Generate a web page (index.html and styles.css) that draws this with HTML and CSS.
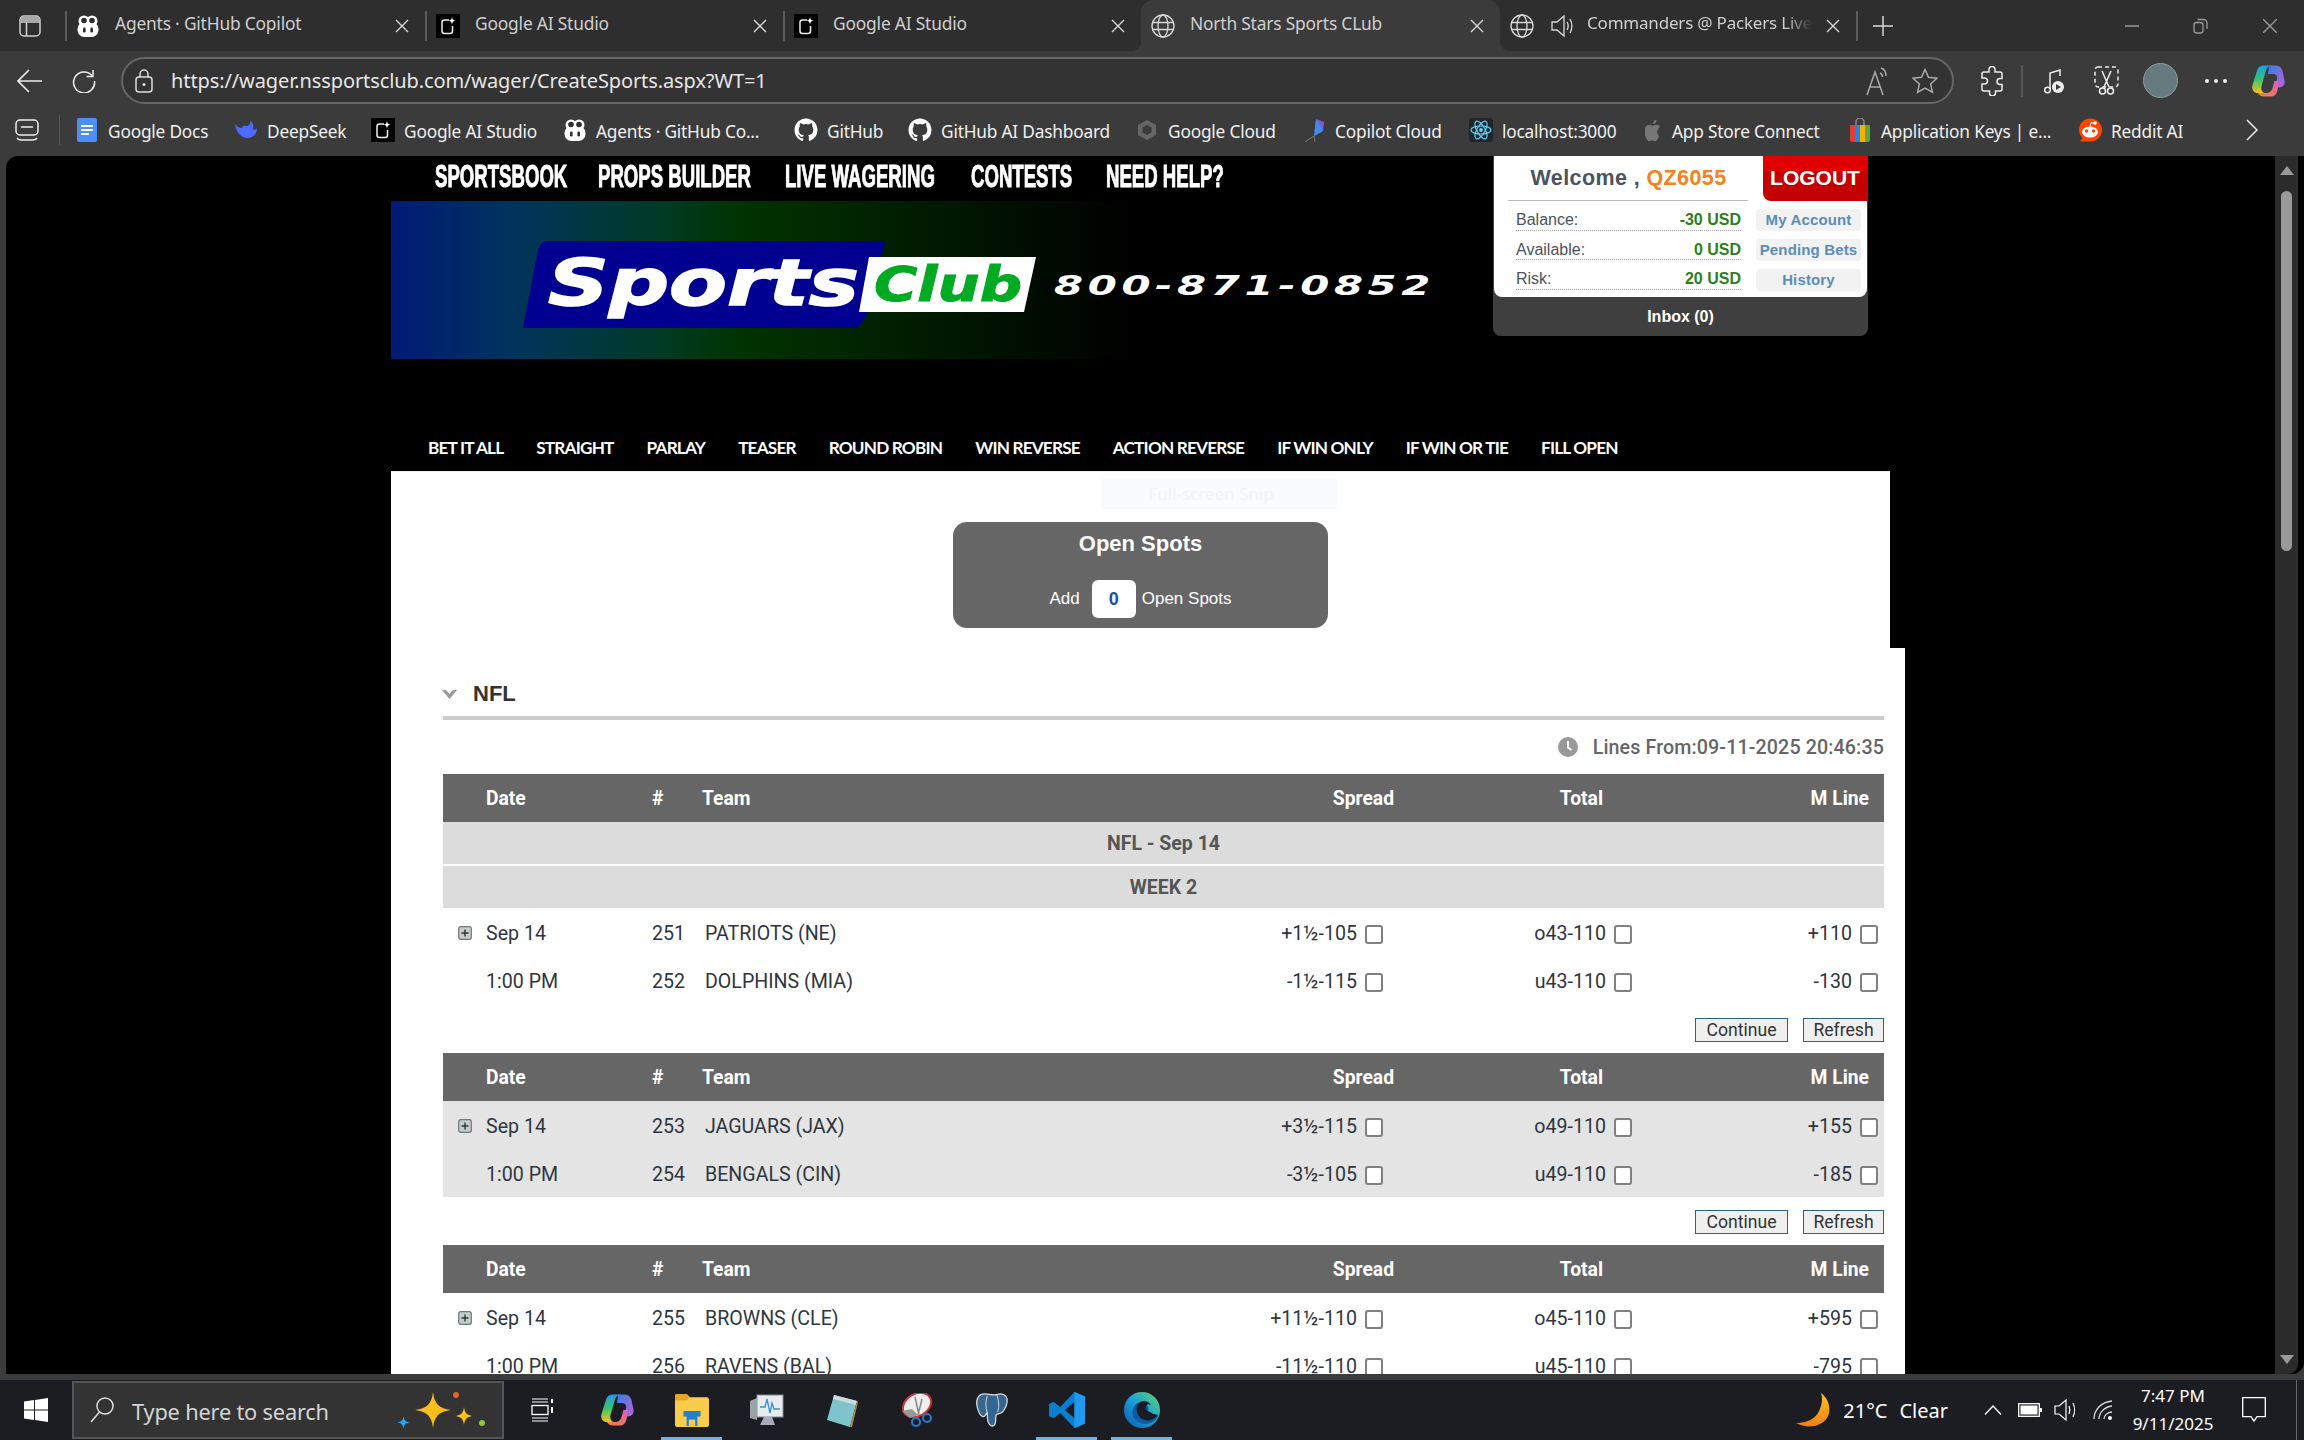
FILE: index.html
```html
<!DOCTYPE html>
<html lang="en">
<head>
<meta charset="utf-8">
<title>North Stars Sports CLub</title>
<link rel="stylesheet" href="styles.css">
</head>
<body>
<svg class="defs" width="0" height="0" aria-hidden="true">
  <defs>
    <linearGradient id="cpA" x1="0" y1="0" x2="0" y2="1"><stop offset="0" stop-color="#1e9be8"/><stop offset=".5" stop-color="#36c56c"/><stop offset="1" stop-color="#f6c21c"/></linearGradient>
    <linearGradient id="cpB" x1="0" y1="0" x2="1" y2="1"><stop offset="0" stop-color="#2f7fe8"/><stop offset="1" stop-color="#c060e0"/></linearGradient>
    <linearGradient id="cpC" x1="1" y1="0" x2="0" y2="1"><stop offset="0" stop-color="#d860b8"/><stop offset="1" stop-color="#f7803a"/></linearGradient>
    <linearGradient id="edgeG" x1="0" y1="1" x2="1" y2="0"><stop offset="0" stop-color="#0c59a4"/><stop offset=".5" stop-color="#1aa0d8"/><stop offset="1" stop-color="#5fd66a"/></linearGradient>
    <linearGradient id="moonG" x1="0" y1="0" x2="0" y2="1"><stop offset="0" stop-color="#f7c222"/><stop offset="1" stop-color="#ef7f1a"/></linearGradient>
    <symbol id="agent" viewBox="0 0 24 24"><circle cx="8" cy="7" r="5.5" fill="#fff"/><circle cx="16" cy="7" r="5.5" fill="#fff"/><rect x="1.5" y="8" width="21" height="15" rx="7" fill="#fff"/><circle cx="8" cy="6.5" r="2.8" fill="#2e2e2e"/><circle cx="16" cy="6.5" r="2.8" fill="#2e2e2e"/><rect x="7" y="13.5" width="2.6" height="5" rx="1.3" fill="#2e2e2e"/><rect x="14.4" y="13.5" width="2.6" height="5" rx="1.3" fill="#2e2e2e"/></symbol>
    <symbol id="aistudio" viewBox="0 0 24 24"><rect width="24" height="24" fill="#000"/><path d="M13 6H8.5A2.5 2.5 0 0 0 6 8.500V17a2.500 2.500 0 0 0 2.500 2.500H14a2.500 2.500 0 0 0 2.500-2.500V12" fill="none" stroke="#eee" stroke-width="1.500"/><path d="M16 3c.3 2.400 1.300 3.400 3.700 3.700C17.300 7 16.300 8 16 10.400 15.700 8 14.700 7 12.300 6.700 14.700 6.400 15.700 5.400 16 3z" fill="#fff"/></symbol>
    <symbol id="globe" viewBox="0 0 24 24"><g fill="none" stroke="#d8d8d8" stroke-width="1.300"><circle cx="12" cy="12" r="11"/><ellipse cx="12" cy="12" rx="5" ry="11"/><path d="M1.500 8.500h21M1.500 15.500h21"/></g></symbol>
    <symbol id="close" viewBox="0 0 14 14"><path d="M1 1l12 12M13 1L1 13" fill="none" stroke="#d8d8d8" stroke-width="1.400"/></symbol>
    <symbol id="octo" viewBox="0 0 24 24"><path fill="#fff" d="M12 .5C5.650.5.500 5.650.500 12c0 5.080 3.290 9.390 7.860 10.910.580.110.790-.250.790-.560v-2.140c-3.200.700-3.870-1.360-3.870-1.360-.520-1.330-1.280-1.690-1.280-1.690-1.050-.720.080-.700.080-.700 1.160.080 1.770 1.190 1.770 1.190 1.030 1.760 2.700 1.250 3.360.960.100-.750.400-1.250.730-1.540-2.550-.290-5.240-1.280-5.240-5.690 0-1.260.450-2.280 1.180-3.090-.120-.290-.510-1.460.110-3.050 0 0 .960-.310 3.150 1.180a10.900 10.900 0 0 1 5.740 0c2.190-1.490 3.150-1.180 3.150-1.180.620 1.590.230 2.760.110 3.050.730.810 1.180 1.830 1.180 3.090 0 4.420-2.690 5.390-5.250 5.680.410.360.780 1.060.780 2.140v3.170c0 .310.210.670.800.560A11.500 11.500 0 0 0 23.500 12C23.500 5.650 18.350.5 12 .5z"/></symbol>
    <symbol id="copilot" viewBox="0 0 24 24"><path fill="url(#cpB)" d="M13 1h4.500c2.500 0 4 1.500 4.700 4L23.500 11c.9 3-.8 5.500-3.800 5.500h-3L18.300 11c.7-2.500-.5-4-3-4h-3.500l.6-2.500C13 2.500 12 1 13 1z"/><path fill="url(#cpC)" d="M16.500 12h3.500l-1.300 6.500C18 21.500 16.500 23 13.500 23H9c-2 0-3.500-1-4-2.500h5.500c2.500 0 4-1 4.700-3.500z"/><path fill="url(#cpA)" d="M8.500 1h6.500C12 1 11 3 10.300 5.500L7.600 15c-.9 3 .2 5.500 3 5.500H5C2 20.500.2 18 1 15L4.300 4.500C4.900 2.500 6.300 1 8.500 1z"/></symbol>
    <symbol id="star4" viewBox="0 0 24 24"><path d="M12 0C13 8 16 11 24 12 16 13 13 16 12 24 11 16 8 13 0 12 8 11 11 8 12 0z"/></symbol>
    <symbol id="chev" viewBox="0 0 15 9"><path d="M0 0h4l3.500 4L11 0h4L7.500 9z" fill="#999"/></symbol>
    <symbol id="plusbox" viewBox="0 0 14 14"><rect x=".7" y=".7" width="12.600" height="12.600" rx="2" fill="#c4cccc" stroke="#6a7878" stroke-width="1.200"/><path d="M3.500 7h7M7 3.500v7" stroke="#333" stroke-width="1.400"/></symbol>
  </defs>
</svg>

<div class="browser">
  <header class="tabstrip">
    <div class="sidebtn"><svg class="ic22" viewBox="0 0 22 22"><rect x="1" y="1" width="20" height="20" rx="4" fill="none" stroke="#d0d0d0" stroke-width="1.500"/><path d="M1 7h20M7.500 7v14" stroke="#d0d0d0" stroke-width="1.500"/><rect x="1.500" y="1.500" width="19" height="5.500" rx="3" fill="#a8a8a8"/></svg></div>
    <i class="tabsep"></i>
    <div class="tab tab-first"><svg class="ic24"><use href="#agent"/></svg><span class="tabtext">Agents · GitHub Copilot</span><svg class="ic14"><use href="#close"/></svg></div>
    <i class="tabsep"></i>
    <div class="tab"><svg class="ic24"><use href="#aistudio"/></svg><span class="tabtext">Google AI Studio</span><svg class="ic14"><use href="#close"/></svg></div>
    <i class="tabsep"></i>
    <div class="tab"><svg class="ic24"><use href="#aistudio"/></svg><span class="tabtext">Google AI Studio</span><svg class="ic14"><use href="#close"/></svg></div>
    <div class="tab tab-active"><svg class="ic24"><use href="#globe"/></svg><span class="tabtext">North Stars Sports CLub</span><svg class="ic14"><use href="#close"/></svg></div>
    <div class="tab tab-last"><svg class="ic24"><use href="#globe"/></svg><svg class="ic24 speaker" viewBox="0 0 24 24"><path d="M2 8h5l7-6v20l-7-6H2z" fill="none" stroke="#d8d8d8" stroke-width="1.300"/><path d="M17 8c1.500 2.500 1.500 5.500 0 8M20 5c2.500 4.500 2.500 9.500 0 14" fill="none" stroke="#d8d8d8" stroke-width="1.300"/></svg><span class="tabtext tabfade">Commanders @ Packers Live</span><svg class="ic14"><use href="#close"/></svg></div>
    <i class="tabsep"></i>
    <svg class="newtab" viewBox="0 0 20 20"><path d="M10 0v20M0 10h20" stroke="#d8d8d8" stroke-width="1.500"/></svg>
    <div class="winctl">
      <div class="winbtn"><svg class="ic14" viewBox="0 0 14 14"><path d="M0 7h14" stroke="#999" stroke-width="1.500"/></svg></div>
      <div class="winbtn"><svg class="ic16" viewBox="0 0 16 16"><rect x="1" y="4.500" width="9" height="10.500" rx="2.500" fill="none" stroke="#999" stroke-width="1.300"/><path d="M4.500 1.500h6a3.500 3.500 0 0 1 3.500 3.500v6" fill="none" stroke="#999" stroke-width="1.300"/></svg></div>
      <div class="winbtn"><svg class="ic14" viewBox="0 0 14 14"><path d="M0 0l14 14M14 0L0 14" stroke="#999" stroke-width="1.400"/></svg></div>
    </div>
  </header>

  <nav class="toolbar">
    <svg class="back" viewBox="0 0 25 24"><path d="M12 1L1 12l11 11M1 12h24" fill="none" stroke="#eee" stroke-width="1.600"/></svg>
    <svg class="reload" viewBox="0 0 24 24"><path d="M20 6.500A10.500 10.500 0 1 0 22.500 12" fill="none" stroke="#eee" stroke-width="1.500"/><path d="M21 1v6.500h-6.500" fill="none" stroke="#eee" stroke-width="1.500"/></svg>
    <div class="urlbar">
      <svg class="lock" viewBox="0 0 18 24"><rect x="1" y="8" width="16" height="15" rx="3" fill="none" stroke="#ddd" stroke-width="1.500"/><path d="M5 8V5a4 4 0 0 1 8 0v3" fill="none" stroke="#ddd" stroke-width="1.500"/><circle cx="9" cy="15.500" r="1.500" fill="#ddd"/></svg>
      <span class="url">https://wager.nssportsclub.com/wager/CreateSports.aspx?WT=1</span>
      <svg class="readaloud" viewBox="0 0 24 30"><path d="M1 29L9 6l8 23M4 21h10" fill="none" stroke="#aaa" stroke-width="1.500"/><path d="M15 2c3 1 5 4 5 8M14 7c1.500.5 2.500 2 2.500 4" fill="none" stroke="#aaa" stroke-width="1.500"/></svg>
      <svg class="favstar" viewBox="0 0 26 26"><path d="M13 1.500l3.500 7.800 8.500.9-6.400 5.700 1.800 8.300L13 20l-7.400 4.200 1.800-8.300L1 10.200l8.500-.9z" fill="none" stroke="#aaa" stroke-width="1.500"/></svg>
    </div>
    <svg class="ext" viewBox="0 0 24 30"><path d="M9 3.500a3 3 0 0 1 6 0V6h5a2 2 0 0 1 2 2v4.500h-2a3 3 0 0 0 0 6h2V23a2 2 0 0 1-2 2h-4.500v2a3 3 0 0 1-6 0v-2H4a2 2 0 0 1-2-2v-5h2.500a3 3 0 0 0 0-6H2V8a2 2 0 0 1 2-2h5z" fill="none" stroke="#eee" stroke-width="1.500"/></svg>
    <i class="tooldiv"></i>
    <svg class="music" viewBox="0 0 20 28"><path d="M6 22V6l10-3v6" fill="none" stroke="#eee" stroke-width="1.500"/><circle cx="3.500" cy="23" r="2.800" fill="none" stroke="#eee" stroke-width="1.500"/><circle cx="14" cy="20" r="6" fill="#eee"/><path d="M12 17v6l5-3z" fill="#3b3b3b"/></svg>
    <svg class="snipic" viewBox="0 0 25 30"><rect x="1" y="1" width="23" height="20" rx="3" fill="none" stroke="#eee" stroke-width="1.500" stroke-dasharray="4 3"/><path d="M8 5l7 16M17 5l-7 16" stroke="#eee" stroke-width="1.500"/><circle cx="8.500" cy="25" r="3" fill="none" stroke="#eee" stroke-width="1.500"/><circle cx="16.500" cy="25" r="3" fill="none" stroke="#eee" stroke-width="1.500"/></svg>
    <div class="avatar"></div>
    <div class="dots"><i></i><i></i><i></i></div>
    <svg class="copilot-top"><use href="#copilot"/></svg>
  </nav>

  <div class="bookmarks">
    <svg class="coll" viewBox="0 0 24 22"><rect x="1" y="1" width="22" height="15" rx="4" fill="none" stroke="#eee" stroke-width="1.500"/><path d="M6 8h12" stroke="#eee" stroke-width="1.500"/><path d="M2 19c1 1.500 2 2 4 2h12c2 0 3-.5 4-2" fill="none" stroke="#eee" stroke-width="1.500"/></svg>
    <i class="booksep"></i>
    <div class="bm bm1"><svg class="ic24" viewBox="0 0 24 24"><path d="M2 2a2 2 0 0 1 2-2h16a2 2 0 0 1 2 2v20a2 2 0 0 1-2 2H4a2 2 0 0 1-2-2z" fill="#4d8ef7"/><path d="M6 8h12M6 12h12M6 16h8" stroke="#fff" stroke-width="2"/></svg><span>Google Docs</span></div>
    <div class="bm bm2"><svg class="ic24" viewBox="0 0 24 24"><path d="M1 6c1 8 6 14 13 14 5 0 9-4 9-10-2 2-3 2-4 1 1-3 0-7-3-8 1 3-1 5-3 5s-4-1-5 2c-2 0-5-1-7-4z" fill="#4d6bfe"/></svg><span>DeepSeek</span></div>
    <div class="bm bm3"><svg class="ic24"><use href="#aistudio"/></svg><span>Google AI Studio</span></div>
    <div class="bm bm4"><svg class="ic24"><use href="#agent"/></svg><span>Agents · GitHub Co...</span></div>
    <div class="bm bm5"><svg class="ic24"><use href="#octo"/></svg><span>GitHub</span></div>
    <div class="bm bm6"><svg class="ic24"><use href="#octo"/></svg><span>GitHub AI Dashboard</span></div>
    <div class="bm bm7"><svg class="ic24" viewBox="0 0 24 24"><path d="M12 2l9 5v10l-9 5-9-5V7z" fill="#666"/><path d="M12 7l4.500 2.500v5L12 17l-4.500-2.500v-5z" fill="#3b3b3b"/></svg><span>Google Cloud</span></div>
    <div class="bm bm8"><svg class="ic24" viewBox="0 0 24 24"><path d="M14 1l8 3-1 9-9 5z" fill="#7a5be0"/><path d="M14 1l-2 17 9-5z" fill="#3f8fe8"/><path d="M12 18L3 24M12 18l1 6" stroke="#777" stroke-width="1"/></svg><span>Copilot Cloud</span></div>
    <div class="bm bm9"><svg class="ic24" viewBox="0 0 24 24"><rect width="24" height="24" rx="3" fill="#20262c"/><g fill="none" stroke="#5fd3f3" stroke-width="1.200"><ellipse cx="12" cy="12" rx="10" ry="4"/><ellipse cx="12" cy="12" rx="10" ry="4" transform="rotate(60 12 12)"/><ellipse cx="12" cy="12" rx="10" ry="4" transform="rotate(120 12 12)"/></g><circle cx="12" cy="12" r="2" fill="#5fd3f3"/></svg><span>localhost:3000</span></div>
    <div class="bm bm10"><svg class="ic18" viewBox="0 0 18 24"><path d="M13 12.500c0-2.500 2-3.600 2.200-3.700-1.200-1.800-3-2-3.700-2-1.500-.2-3 .9-3.800.9s-2-.9-3.300-.9C2.700 6.900 1 8 .2 9.800c-1.500 3.300-.4 8.200 1.100 10.800.7 1.300 1.600 2.700 2.800 2.700 1.100 0 1.600-.8 3-.8s1.800.8 3 .7c1.300 0 2-1.200 2.800-2.500.9-1.400 1.200-2.800 1.300-2.900-1.400-.5-2.200-2.200-2.200-5.300zM10.700 4.800c.6-.8 1.100-1.900 1-3-.9 0-2 .6-2.700 1.400-.6.700-1.100 1.800-1 2.900 1 0 2-.5 2.700-1.300z" fill="#777"/></svg><span>App Store Connect</span></div>
    <div class="bm bm11"><svg class="ic24" viewBox="0 0 24 24"><path d="M8 7V4a4 4 0 0 1 8 0v3" fill="none" stroke="#888" stroke-width="1.500"/><path d="M2 7h5v17H4a2 2 0 0 1-2-2z" fill="#e53935"/><path d="M7 7h5v17H7z" fill="#1e88e5"/><path d="M12 7h5v17h-5z" fill="#fbb000"/><path d="M17 7h5v15a2 2 0 0 1-2 2h-3z" fill="#5aa83c"/></svg><span>Application Keys | e...</span></div>
    <div class="bm bm12"><svg class="ic24" viewBox="0 0 24 24"><path d="M1 12a11.500 11.500 0 1 1 11 11.500H2l2.500-3.500A11 11 0 0 1 1 12z" fill="#ff4500"/><ellipse cx="12" cy="14" rx="8" ry="5.500" fill="#fff"/><circle cx="8.500" cy="13" r="1.700" fill="#ff4500"/><circle cx="15.500" cy="13" r="1.700" fill="#ff4500"/><circle cx="17" cy="5" r="1.800" fill="#fff"/><path d="M9 17c2 1.200 4 1.200 6 0M12 8.500l1-4 4 1" fill="none" stroke="#fff" stroke-width="1"/></svg><span>Reddit AI</span></div>
    <svg class="bmmore" viewBox="0 0 12 22"><path d="M1 1l10 10L1 21" fill="none" stroke="#eee" stroke-width="1.500"/></svg>
  </div>

  <div class="viewport">
    <main class="pagearea">
      <div class="pagehead">
        <div class="headleft">
          <div class="topnav">
            <a class="toplink">SPORTSBOOK</a>
            <a class="toplink">PROPS BUILDER</a>
            <a class="toplink">LIVE WAGERING</a>
            <a class="toplink">CONTESTS</a>
            <a class="toplink">NEED HELP?</a>
          </div>
          <div class="banner">
            <svg class="logo" viewBox="0 0 1060 158" width="1060" height="158">
              <path d="M146 40h348l-18 72c-3 10-8 15-18 15H132l14-73c2-9 4-14 10-14z" fill="#000090"/>
              <path d="M478 56h167l-12 55H468z" fill="#fff"/>
              <text x="157" y="104" class="logo-sports" textLength="311" lengthAdjust="spacingAndGlyphs">Sports</text>
              <text x="483" y="100" class="logo-club" textLength="148" lengthAdjust="spacingAndGlyphs">Club</text>
              <text x="663" y="94" class="logo-phone" textLength="381" lengthAdjust="spacingAndGlyphs">800-871-0852</text>
            </svg>
          </div>
        </div>
        <aside class="account">
          <div class="acct-card">
            <div class="acct-top">
              <div class="welcome">Welcome , <b class="user">QZ6055</b></div>
              <a class="logout">LOGOUT</a>
            </div>
            <div class="acct-body">
              <div class="acct-rows">
                <div class="acct-row"><span>Balance:</span><b>-30 USD</b></div>
                <div class="acct-row"><span>Available:</span><b>0 USD</b></div>
                <div class="acct-row"><span>Risk:</span><b>20 USD</b></div>
              </div>
              <div class="acct-links">
                <a class="acct-link">My Account</a>
                <a class="acct-link">Pending Bets</a>
                <a class="acct-link">History</a>
              </div>
            </div>
          </div>
          <div class="inbox">Inbox (0)</div>
        </aside>
      </div>
      <div class="subnav">
        <a>BET IT ALL</a><a>STRAIGHT</a><a>PARLAY</a><a>TEASER</a><a>ROUND ROBIN</a><a>WIN REVERSE</a><a>ACTION REVERSE</a><a>IF WIN ONLY</a><a>IF WIN OR TIE</a><a>FILL OPEN</a>
      </div>
      <section class="openarea">
        <div class="sniptip">Full-screen Snip</div>
        <div class="openbox">
          <h2 class="opentitle">Open Spots</h2>
          <div class="openrow"><span>Add</span><input class="openinput" value="0" readonly><span>Open Spots</span></div>
        </div>
      </section>
      <section class="sports">
        <div class="league"><svg class="chev"><use href="#chev"/></svg><h1>NFL</h1></div>
        <div class="linesfrom"><svg class="clock" viewBox="0 0 20 20"><circle cx="10" cy="10" r="10" fill="#999"/><path d="M10 4v6.500l3.500 2.500" fill="none" stroke="#fff" stroke-width="2"/></svg><span>Lines From:09-11-2025 20:46:35</span></div>

        <div class="row thead"><span></span><span>Date</span><span>#</span><span>Team</span><span class="hs">Spread</span><span class="ht">Total</span><span class="hm">M Line</span></div>
        <div class="band">NFL - Sep 14</div>
        <div class="band band2">WEEK 2</div>
        <div class="row game"><svg class="expand"><use href="#plusbox"/></svg><span>Sep 14</span><span>251</span><span class="team">PATRIOTS (NE)</span><label class="vs">+1½-105<input type="checkbox"></label><label class="vt">o43-110<input type="checkbox"></label><label class="vm">+110<input type="checkbox"></label></div>
        <div class="row game"><span></span><span>1:00 PM</span><span>252</span><span class="team">DOLPHINS (MIA)</span><label class="vs">-1½-115<input type="checkbox"></label><label class="vt">u43-110<input type="checkbox"></label><label class="vm">-130<input type="checkbox"></label></div>
        <div class="actions actions-first"><button>Continue</button><button>Refresh</button></div>

        <div class="row thead"><span></span><span>Date</span><span>#</span><span>Team</span><span class="hs">Spread</span><span class="ht">Total</span><span class="hm">M Line</span></div>
        <div class="row game alt"><svg class="expand"><use href="#plusbox"/></svg><span>Sep 14</span><span>253</span><span class="team">JAGUARS (JAX)</span><label class="vs">+3½-115<input type="checkbox"></label><label class="vt">o49-110<input type="checkbox"></label><label class="vm">+155<input type="checkbox"></label></div>
        <div class="row game alt"><span></span><span>1:00 PM</span><span>254</span><span class="team">BENGALS (CIN)</span><label class="vs">-3½-105<input type="checkbox"></label><label class="vt">u49-110<input type="checkbox"></label><label class="vm">-185<input type="checkbox"></label></div>
        <div class="actions"><button>Continue</button><button>Refresh</button></div>

        <div class="row thead"><span></span><span>Date</span><span>#</span><span>Team</span><span class="hs">Spread</span><span class="ht">Total</span><span class="hm">M Line</span></div>
        <div class="row game"><svg class="expand"><use href="#plusbox"/></svg><span>Sep 14</span><span>255</span><span class="team">BROWNS (CLE)</span><label class="vs">+11½-110<input type="checkbox"></label><label class="vt">o45-110<input type="checkbox"></label><label class="vm">+595<input type="checkbox"></label></div>
        <div class="row game"><span></span><span>1:00 PM</span><span>256</span><span class="team">RAVENS (BAL)</span><label class="vs">-11½-110<input type="checkbox"></label><label class="vt">u45-110<input type="checkbox"></label><label class="vm">-795<input type="checkbox"></label></div>
      </section>
    </main>
    <div class="scrollbar">
      <i class="arrow-up"></i>
      <div class="track"><div class="thumb"></div></div>
      <i class="arrow-down"></i>
    </div>
  </div>

  <footer class="taskbar">
    <div class="startbtn"><svg class="winlogo" viewBox="0 0 24 24"><path d="M0 3.500l10-1.400V11.500H0zM11 2l13-2v11.500H11zM0 12.500h10v9.500L0 20.500zM11 12.500h13V24l-13-2z" fill="#fff"/></svg></div>
    <div class="search">
      <svg class="mag" viewBox="0 0 24 26"><circle cx="15" cy="9" r="8" fill="none" stroke="#ddd" stroke-width="1.500"/><path d="M9.500 15L1 25" stroke="#ddd" stroke-width="1.500"/></svg>
      <span class="searchtext">Type here to search</span>
      <svg class="sparkles" viewBox="0 0 90 36"><use href="#star4" x="18" y="0" width="36" height="36" fill="#fbbf1d"/><use href="#star4" x="58" y="15" width="18" height="18" fill="#fbbf1d"/><use href="#star4" x="0" y="24" width="13" height="13" fill="#2aa0f0"/><circle cx="59" cy="3" r="3" fill="#e8602c"/><circle cx="85" cy="31" r="3" fill="#8cc63f"/></svg>
    </div>
    <div class="slot"><svg class="ic24" viewBox="0 0 24 24"><path d="M2 1h16M2 4h16M2 20h16M2 23h16" stroke="#fff" stroke-width="1.200" fill="none"/><rect x="2" y="7.500" width="16" height="9" fill="none" stroke="#fff" stroke-width="1.300"/><path d="M22 1v4M22 9v6" stroke="#fff" stroke-width="2"/></svg></div>
    <div class="slot"><svg class="ic34"><use href="#copilot"/></svg></div>
    <div class="slot on"><svg class="ic34" viewBox="0 0 32 32"><path d="M0 3a2 2 0 0 1 2-2h9l3 3h16a2 2 0 0 1 2 2v24a2 2 0 0 1-2 2H2a2 2 0 0 1-2-2z" fill="#fbcb4b"/><path d="M0 3a2 2 0 0 1 2-2h9l3 3 -3 3H0z" fill="#e8a628"/><path d="M8 17h16v5H8zM11 22h10v9H11z" fill="#1f7fd0"/><path d="M13 25h6v6h-6z" fill="#fbcb4b"/></svg></div>
    <div class="slot"><svg class="ic34" viewBox="0 0 34 34"><rect x="7" y="2" width="26" height="22" fill="#e8ecef" stroke="#889" stroke-width="1"/><path d="M10 14l5 0 2-8 3 14 2-10 2 6h6" fill="none" stroke="#3a8fd8" stroke-width="1.300"/><path d="M0 8l7-3v22l-7-2z" fill="#9aa3a8"/><path d="M14 24h8l3 8H10z" fill="#aab"/></svg></div>
    <div class="slot"><svg class="ic34" viewBox="0 0 34 34"><path d="M9 2l23 6-7 26L2 27z" fill="#7fc4cc"/><path d="M9 2l23 6-1 4-23-6z" fill="#cfd8da"/><path d="M25 34l7-26 1 1-6 25z" fill="#b08a3a"/></svg></div>
    <div class="slot"><svg class="ic34" viewBox="0 0 34 34"><ellipse cx="17" cy="12" rx="15" ry="11" transform="rotate(-30 17 12)" fill="#eee" stroke="#c33" stroke-width="2"/><path d="M2 18l10-2 6 6-8 3z" fill="#999"/><path d="M15 4l4 18M22 6l-4 16" stroke="#888" stroke-width="1.500"/><circle cx="16" cy="29" r="4" fill="none" stroke="#1f7fd0" stroke-width="2"/><circle cx="27" cy="25" r="4" fill="none" stroke="#1f7fd0" stroke-width="2"/></svg></div>
    <div class="slot"><svg class="ic34" viewBox="0 0 34 36"><path d="M9 1C3 1 0 6 1 13c1 6 4 13 7 12 2 0 2-3 4-4 0 6 0 13 5 14 4 0 4-5 4-10 0-2 1-3 3-3 4 0 8-6 9-12 1-5-2-9-7-9-2 0-4 1-6 1S13 1 9 1z" fill="#336791" stroke="#ddd" stroke-width="1.300"/><path d="M12 3c-2 6-2 12 0 18M22 2c2 5 3 12 1 18" fill="none" stroke="#ddd" stroke-width="1"/></svg></div>
    <div class="slot on"><svg class="ic36" viewBox="0 0 24 24"><path fill="#0a7fd0" fill-rule="evenodd" d="M17 0L7.500 10 3 6.500 0 8v8l3 1.500L7.500 14 17 24l7-3V3zM17 6.500L10.500 12l6.500 5.500z"/><path fill="#1e9bf0" d="M17 0l7 3v18l-7 3z"/></svg></div>
    <div class="slot on"><svg class="ic36" viewBox="0 0 36 36"><circle cx="18" cy="18" r="18" fill="url(#edgeG)"/><path d="M34 24c-3 8-14 10-20 6-6-3-8-12-2-18 3-2 9-2 11 1 2 2 2 5 0 7 5 3 9 1 11 4z" fill="#0d5aa8"/><path d="M26 20c-3-1-5-3-4-6 1-2 3-2 5-1-3-5-10-5-13-1-3 5-1 12 4 15 6 3 12 1 16-4-2 0-6-1-8-3z" fill="#1b1c22"/></svg></div>
    <div class="tray">
      <svg class="moon" viewBox="0 0 34 34"><path d="M25 0c8 6 11 17 6 25-6 9-20 11-31 5 7 0 17-2 22-10 4-7 5-14 3-20z" fill="url(#moonG)"/></svg>
      <span class="weather">21°C</span><span class="weather clear">Clear</span>
      <svg class="trayup" viewBox="0 0 18 10"><path d="M1 9.500L9 1l8 8.500" fill="none" stroke="#fff" stroke-width="1.300"/></svg>
      <svg class="battery" viewBox="0 0 24 14"><rect x=".7" y=".7" width="20.600" height="12.600" fill="none" stroke="#fff" stroke-width="1.300"/><rect x="2.500" y="2.500" width="17" height="9" fill="#fff"/><rect x="22" y="5" width="2" height="4" fill="#fff"/></svg>
      <svg class="vol" viewBox="0 0 23 24"><path d="M1 8h4l7-6v20l-7-6H1z" fill="none" stroke="#fff" stroke-width="1.200"/><path d="M15 8c1 2.500 1 5.500 0 8M19 5c2 4 2 10 0 14" fill="none" stroke="#fff" stroke-width="1.200"/></svg>
      <svg class="wifi" viewBox="0 0 19 20"><path d="M1 19C1 10 8 2 19 1M6 19c0-6 5-12 13-13M11 19c0-3 3-7 8-7" fill="none" stroke="#ddd" stroke-width="1.300"/><circle cx="17" cy="18" r="2" fill="#fff"/></svg>
      <div class="clocktext"><span>7:47 PM</span><span>9/11/2025</span></div>
      <svg class="notif" viewBox="0 0 24 26"><path d="M.7.7h22.600v19H15l-3 4.500-3-4.500H.7z" fill="none" stroke="#fff" stroke-width="1.300"/></svg>
      <i class="showdesk"></i>
    </div>
  </footer>
</div>
</body>
</html>
```

FILE: styles.css
```css
* { box-sizing: border-box; }
html, body { margin: 0; padding: 0; width: 2304px; height: 1440px; overflow: hidden; background: #3b3b3b; }
body { font-family: "Noto Sans", sans-serif; }
a { color: inherit; text-decoration: none; }
.defs { display: block; height: 0; width: 0; }
.browser { display: grid; grid-template-rows: 51px 53px 52px 1218px 6px 60px; width: 2304px; height: 1440px; }

.ic14 { width: 14px; height: 14px; flex: none; }
.ic16 { width: 16px; height: 16px; flex: none; }
.ic18 { width: 18px; height: 24px; flex: none; }
.ic22 { width: 22px; height: 22px; flex: none; }
.ic24 { width: 24px; height: 24px; flex: none; }
.ic34 { width: 34px; height: 34px; flex: none; }
.ic36 { width: 36px; height: 36px; flex: none; }

/* tab strip */
.tabstrip { display: flex; align-items: center; background: #2e2e2e; color: #cfcfcf; font-size: 17.400px; }
.sidebtn { width: 65px; padding-left: 19px; display: flex; }
.tabsep { width: 2px; height: 30px; background: #5c5c5c; flex: none; }
.tab { width: 356px; height: 51px; display: flex; align-items: center; padding: 0 16px 0 9px; flex: none; }
.tab-first { width: 358px; }
.tabtext { flex: 1; margin: -5px 0 0 15px; white-space: nowrap; overflow: hidden; letter-spacing: -.2px; line-height: 26px; }
.tab-active { width: 359px; background: #3b3b3b; border-radius: 12px 12px 0 0; margin-left: 0; padding-left: 10px; position: relative; }
.tab-active::before, .tab-active::after { content: ""; position: absolute; bottom: 0; width: 10px; height: 10px; }
.tab-active::before { left: -10px; background: radial-gradient(circle at 0 0, #2e2e2e 10px, #3b3b3b 10.5px); }
.tab-active::after { right: -10px; background: radial-gradient(circle at 100% 0, #2e2e2e 10px, #3b3b3b 10.5px); }
.tab-last { width: 356px; padding-left: 10px; }
.speaker { margin-left: 16px; }
.tab-last .tabtext { margin-left: 13px; margin-right: 14px; font-size: 17px; }
.tabfade { -webkit-mask-image: linear-gradient(90deg, #000 88%, transparent); mask-image: linear-gradient(90deg, #000 88%, transparent); }
.newtab { width: 20px; height: 20px; margin-left: 15px; flex: none; }
.winctl { display: flex; margin-left: auto; }
.winbtn { width: 69px; height: 51px; display: flex; align-items: center; justify-content: center; }

/* toolbar */
.toolbar { display: flex; align-items: center; background: #3b3b3b; padding-left: 17px; }
.back { width: 25px; height: 24px; flex: none; }
.reload { width: 24px; height: 24px; margin-left: 30px; flex: none; }
.urlbar { width: 1833px; height: 47px; margin: 6px 0 0 25px; flex: none; border: 2px solid #666; border-radius: 24px; background: #333; display: flex; align-items: center; padding-left: 12px; }
.toolbar > svg { margin-top: 6px; }
.lock { width: 18px; height: 24px; flex: none; }
.url { margin-left: 18px; color: #e6e6e6; font-size: 20px; white-space: nowrap; letter-spacing: -.1px; flex: 1; }
.readaloud { width: 24px; height: 30px; flex: none; margin-right: 22px; }
.favstar { width: 26px; height: 26px; flex: none; margin-right: 14px; }
.ext { width: 24px; height: 30px; margin-left: 26px; flex: none; }
.tooldiv { width: 2px; height: 32px; margin: 6px 0 0 17px; background: #555; flex: none; }
.music { width: 20px; height: 28px; margin-left: 21px; flex: none; }
.snipic { width: 25px; height: 30px; margin-left: 30px; flex: none; }
.avatar { width: 35px; height: 35px; margin: 6px 0 0 24px; border-radius: 50%; background: #667a80; border: 1px solid #8a9a9f; flex: none; }
.dots { display: flex; gap: 5px; margin: 6px 0 0 27px; width: 20px; flex: none; }
.dots i { width: 4px; height: 4px; border-radius: 50%; background: #eee; flex: none; }
.copilot-top { width: 34px; height: 34px; margin-left: 26px; flex: none; }

/* bookmarks */
.bookmarks { display: flex; align-items: center; background: #3b3b3b; padding-left: 15px; color: #f0f0f0; font-size: 17.300px; letter-spacing: -.2px; }
.coll { width: 24px; height: 22px; flex: none; }
.booksep { width: 1px; height: 30px; background: #555; margin: 0 15px 0 20px; flex: none; }
.bm { display: flex; align-items: center; gap: 9px; flex: none; white-space: nowrap; }
.bm span { padding-top: 2px; }
.bm1 { width: 159px; }
.bm2 { width: 137px; }
.bm3 { width: 192px; }
.bm4 { width: 231px; }
.bm5 { width: 114px; }
.bm6 { width: 227px; }
.bm7 { width: 167px; }
.bm8 { width: 167px; }
.bm9 { width: 176px; }
.bm10 { width: 203px; }
.bm11 { width: 230px; }
.bm12 { width: 168px; }
.bmmore { width: 12px; height: 22px; flex: none; }

/* viewport */
.viewport { display: flex; background: #000; overflow: hidden; margin-left: 6px; border-radius: 12px 0 12px 0; }
.pagearea { width: 2269px; flex: none; padding-left: 385px; font-family: "Liberation Sans", Arial, sans-serif; overflow: hidden; }
.pagehead { display: grid; grid-template-columns: 1102px 375px; height: 269px; }
.topnav { display: grid; grid-template-columns: 163px 187px 186px 135px 120px; height: 45px; align-items: center; padding: 0 0 4px 44px; }
.toplink { color: #fff; font: 700 31px/1 "Liberation Sans", Arial, sans-serif; white-space: nowrap; transform: scaleX(.6); transform-origin: left center; -webkit-text-stroke: 1px #fff; }
.banner { height: 158px; background: linear-gradient(90deg, #001a78 0, #00355a 130px, #003a20 280px, #003300 350px, #000 740px); }
.logo { display: block; }
.logo-sports { font: italic 700 64px "DejaVu Sans", sans-serif; fill: #fff; stroke: #fff; stroke-width: 1.500px; }
.logo-club { font: italic 700 48px "DejaVu Sans", sans-serif; fill: #00aa22; stroke: #00aa22; stroke-width: 1px; }
.logo-phone { font: italic 700 27px "DejaVu Sans", sans-serif; fill: #fff; letter-spacing: 3px; }

.account { display: flex; flex-direction: column; height: 180px; background: #3f3f3f; border-radius: 0 0 8px 8px; }
.acct-card { height: 141px; margin: 0 1px; background: #fff; border-radius: 0 0 8px 8px; color: #4a5360; }
.acct-top { display: flex; height: 45px; }
.welcome { width: 269px; text-align: center; font-weight: 700; font-size: 21.500px; letter-spacing: .4px; line-height: 44px; color: #4a5360; padding: 0; white-space: nowrap; }
.user { color: #f58220; }
.logout { width: 104px; background: linear-gradient(#e00000 0, #e00000 15px, #c40000 15px); color: #fff; font-weight: 700; font-size: 21px; line-height: 44px; text-align: center; border-radius: 0 0 0 8px; }
.acct-body { display: grid; grid-template-columns: 262px 105px; }
.acct-rows { margin: -1px 0 0 14px; border-top: 1px solid #bbb; padding: 0 7px 0 8px; width: 240px; }
.acct-row { display: flex; justify-content: space-between; height: 29.500px; padding-top: 8px; font-size: 16px; line-height: 21px; border-bottom: 1px dotted #aaa; }
.acct-row b { color: #2a7f1e; }
.acct-links { display: flex; flex-direction: column; gap: 8px; padding-top: 8px; }
.acct-link { height: 22px; background: #f2f2f2; border-radius: 4px; color: #5b8db8; font-size: 15px; font-weight: 700; line-height: 22px; text-align: center; letter-spacing: .15px; white-space: nowrap; }
.inbox { flex: 1; color: #fff; font-weight: 700; font-size: 16px; line-height: 39px; text-align: center; }

.subnav { display: flex; gap: 33px; height: 46px; padding: 12px 0 0 37px; color: #fff; font: 700 17.200px/22px Lato, sans-serif; letter-spacing: -.82px; white-space: nowrap; }

.openarea { position: relative; width: 1499px; height: 177px; background: #fff; padding-top: 51px; border-top: 1px solid #eee; }
.sniptip { position: absolute; left: 710px; top: 6px; width: 236px; height: 31px; padding-right: 16px; background: #fafbfd; color: #f1f3f6; font: 17px/31px "Noto Sans", sans-serif; text-align: center; }
.openbox { width: 375px; height: 106px; margin: -1px auto 0; background: #666; border-radius: 14px; color: #fff; padding-top: 10px; text-align: center; }
.opentitle { margin: 0; font-size: 22px; line-height: 24px; font-weight: 700; }
.openrow { display: flex; justify-content: center; align-items: center; margin-top: 23px; font-size: 17px; line-height: 40px; }
.openinput { width: 44px; height: 38px; margin: 0 6px 0 12px; border: 0; border-radius: 6px; background: #fff; color: #1a4fa0; font: 700 18px "Liberation Sans", sans-serif; text-align: center; padding: 0; }

.sports { width: 1514px; background: #fff; padding: 24px 21px 0 52px; font-family: Roboto, sans-serif; color: #2f3640; }
.league { display: flex; align-items: center; height: 48px; border-bottom: 4px solid #ccc; }
.chev { width: 15px; height: 9px; margin-left: -1px; flex: none; }
.league h1 { margin: 0 0 0 16px; font: 700 22px "Liberation Sans", sans-serif; color: #333; }
.linesfrom { display: flex; justify-content: flex-end; align-items: center; height: 54px; font-size: 19.700px; font-weight: 500; color: #666; letter-spacing: .1px; }
.clock { width: 20px; height: 20px; margin-right: 15px; flex: none; }
.row { display: grid; grid-template-columns: 43px 166px 50px 448px 244px 246px 244px; align-items: center; width: 1441px; height: 48px; font-size: 19.600px; }
.thead { background: #666; color: #fff; font-weight: 700; font-size: 19.300px; }
.game { padding-top: 2px; }
.hs { text-align: right; }
.ht { text-align: right; padding-right: 37px; }
.hm { text-align: right; padding-right: 15px; }
.band { height: 42px; background: #dcdcdc; text-align: center; font-weight: 700; font-size: 19.500px; line-height: 43px; color: #555; }
.band2 { margin-top: 2px; }
.team { padding-left: 3px; }
.alt { background: #e4e4e4; }
.expand { width: 14px; height: 14px; margin-left: 15px; }
.vs, .vt, .vm { display: flex; justify-content: flex-end; align-items: center; }
.vs { padding-right: 11px; }
.vt { padding-right: 8px; }
.vm { padding-right: 6px; }
.row input { appearance: none; -webkit-appearance: none; width: 18px; height: 19px; margin: 2px 0 0 8px; background: #fff; border: 2px solid #808080; border-radius: 3px; flex: none; }
.actions { display: flex; justify-content: flex-end; gap: 15px; width: 1441px; height: 48px; padding-top: 13px; }
.actions-first { height: 49px; padding-top: 14px; }
.actions button { width: 81px; height: 24px; padding: 0; background: #efefef; border: 1px solid #2c5f8a; color: #333; font: 17.600px/20px Roboto, sans-serif; }
.actions button:first-child { width: 93px; }

/* scrollbar */
.scrollbar { display: flex; flex-direction: column; align-items: center; width: 23px; flex: none; background: #2b2b2b; border-radius: 0 0 10px 0; padding: 10px 0; }
.arrow-up { width: 0; height: 0; border: 7px solid transparent; border-top: 0; border-bottom: 9px solid #9a9a9a; flex: none; }
.arrow-down { width: 0; height: 0; border: 7px solid transparent; border-bottom: 0; border-top: 9px solid #9a9a9a; flex: none; }
.track { flex: 1; width: 100%; padding: 16px 6px; }
.thumb { height: 360px; background: #9a9a9a; border-radius: 6px; }

/* taskbar */
.taskbar { grid-row: 6; display: flex; align-items: center; background: #1c1d22; color: #fff; }
.startbtn { width: 72px; display: flex; justify-content: center; flex: none; }
.winlogo { width: 24px; height: 24px; }
.search { width: 432px; height: 58px; background: #333; border: 2px solid #555; display: flex; align-items: center; padding-left: 16px; flex: none; }
.mag { width: 24px; height: 26px; flex: none; }
.searchtext { margin: 2px 0 0 18px; font-size: 21.800px; color: #d5d5d5; flex: 1; white-space: nowrap; letter-spacing: -.2px; }
.sparkles { width: 90px; height: 36px; margin-right: 15px; flex: none; }
.slot { width: 75px; height: 60px; display: flex; align-items: center; justify-content: center; flex: none; }
.slot.on { background: linear-gradient(#6db3e8, #6db3e8) center bottom / 61px 3px no-repeat; }
.tray { display: flex; align-items: center; margin-left: auto; height: 60px; }
.moon { width: 34px; height: 34px; flex: none; }
.weather { margin-left: 13px; font-size: 20px; }
.clear { margin-left: 12px; }
.trayup { width: 18px; height: 10px; margin-left: 36px; flex: none; }
.battery { width: 24px; height: 14px; margin-left: 16px; flex: none; }
.vol { width: 23px; height: 24px; margin-left: 12px; flex: none; }
.wifi { width: 19px; height: 20px; margin-left: 16px; flex: none; }
.clocktext { display: flex; flex-direction: column; align-items: center; width: 84px; margin-left: 19px; font-size: 17px; line-height: 28px; }
.notif { width: 24px; height: 26px; margin-left: 27px; flex: none; }
.showdesk { width: 1px; height: 60px; margin: 0 7px 0 30px; background: #666; flex: none; }
```
